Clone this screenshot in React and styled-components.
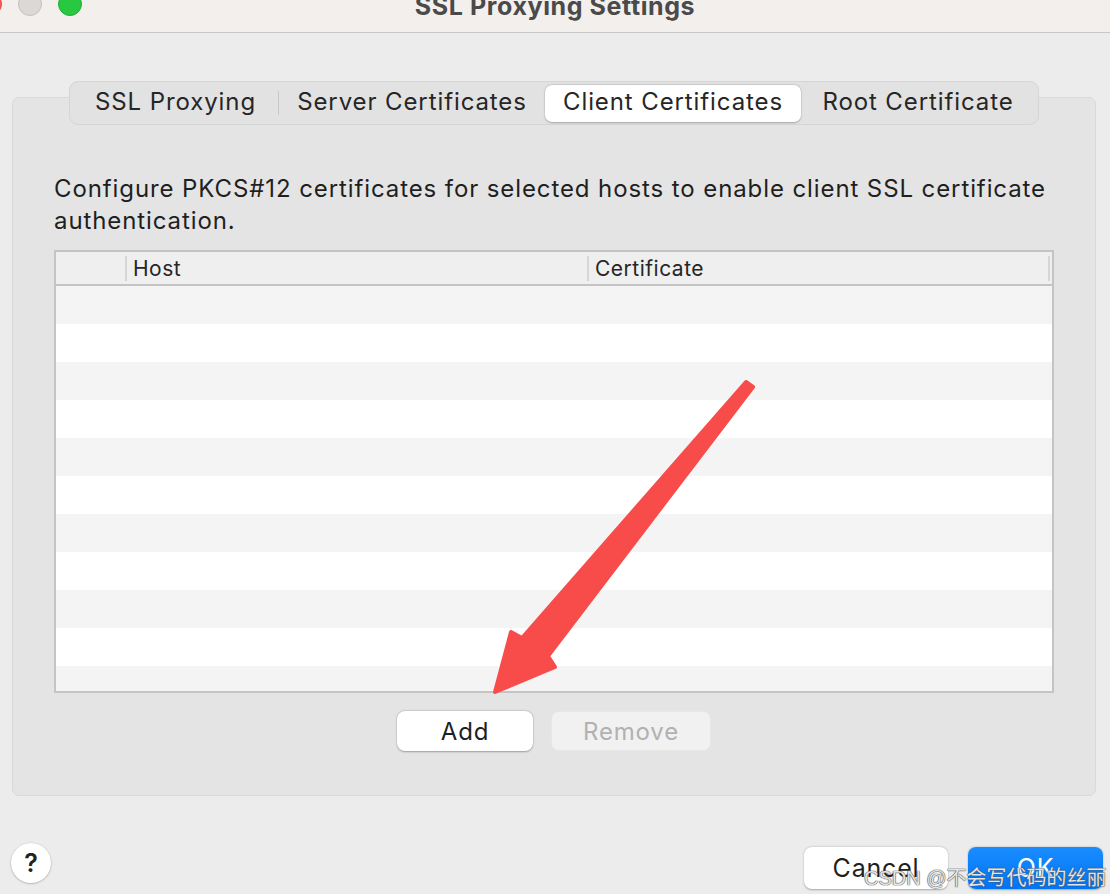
import React from "react";
import styled, { createGlobalStyle } from "styled-components";

const GlobalStyle = createGlobalStyle`
  html, body {
    margin: 0;
    padding: 0;
    background: #ececec;
  }
  body {
    font-family: Inter, "Noto Sans", "Liberation Sans", sans-serif;
    color: #262626;
  }
`;

const Window = styled.div`
  position: relative;
  width: 1110px;
  height: 894px;
  overflow: hidden;
  background: #ececec;
`;

const TitleBar = styled.div`
  height: 32px;
  display: grid;
  grid-template-columns: 1fr auto 1fr;
  align-items: start;
  background: #f3efec;
  border-bottom: 1px solid #c9c7c5;
  overflow: hidden;
`;

const Lights = styled.div`
  display: flex;
  gap: 16px;
  margin-left: -22px;
  margin-top: -8px;
`;

const Light = styled.span`
  width: 24px;
  height: 24px;
  border-radius: 50%;
  box-sizing: border-box;
  background: ${(p) => p.color};
  border: 1px solid ${(p) => p.edge};
`;

const Title = styled.div`
  font-size: 25px;
  font-weight: 700;
  letter-spacing: 0.6px;
  color: #4a4a4a;
  line-height: 25px;
  margin-top: -6px;
`;

const GroupBox = styled.div`
  margin: 64px 14px 0 12px;
  height: 699px;
  box-sizing: border-box;
  background: #e4e4e4;
  border: 1px solid #d9d9d9;
  border-radius: 7px;
  padding: 0 41px;
  display: flex;
  flex-direction: column;
`;

const TabBar = styled.div`
  align-self: center;
  margin-top: -17px;
  height: 44px;
  box-sizing: border-box;
  display: flex;
  align-items: center;
  padding: 0 3px;
  background: #e2e2e2;
  border: 1px solid #d5d5d5;
  border-radius: 9px;
`;

const Tab = styled.div`
  width: ${(p) => p.w}px;
  height: 37px;
  box-sizing: border-box;
  padding-bottom: 3px;
  display: flex;
  align-items: center;
  justify-content: center;
  font-size: 24px;
  letter-spacing: 0.9px;
  color: #262626;
  border-radius: 7px;
  background: ${(p) => (p.active ? "#ffffff" : "transparent")};
  box-shadow: ${(p) =>
    p.active ? "0 0.5px 2px rgba(0,0,0,0.25), 0 0 0 0.5px rgba(0,0,0,0.06)" : "none"};
`;

const TabDivider = styled.span`
  width: 1px;
  height: 24px;
  background: #c8c8c8;
`;

const Description = styled.p`
  margin: 48px 0 0;
  font-size: 24px;
  letter-spacing: 0.9px;
  line-height: 32px;
  color: #1f1f1f;
`;

const Table = styled.div`
  margin-top: 13px;
  height: 443px;
  box-sizing: border-box;
  border: 2px solid #c4c4c4;
  background: #ffffff;
  display: flex;
  flex-direction: column;
  overflow: hidden;
`;

const HeaderRow = styled.div`
  height: 32px;
  flex: none;
  display: grid;
  grid-template-columns: 71px 462px 1fr;
  background: #efefef;
  border-bottom: 2px solid #c4c4c4;
`;

const HeaderCell = styled.div`
  display: flex;
  align-items: center;
  padding-left: 6px;
  font-size: 21px;
  letter-spacing: 0.5px;
  color: #262626;
  border-right: 2px solid #d6d6d6;
  margin: 4px 0 3px;
  ${(p) => (p.last ? "margin-right: 2px;" : "")}
`;

const Row = styled.div`
  height: 38px;
  flex: none;
  background: ${(p) => (p.odd ? "#ffffff" : "#f4f4f4")};
`;

const ButtonRow = styled.div`
  display: flex;
  justify-content: center;
  gap: 18px;
  margin-top: 18px;
`;

const PushButton = styled.button`
  width: ${(p) => p.w}px;
  height: 40px;
  border-radius: 8px;
  font-family: inherit;
  font-size: 24px;
  letter-spacing: 0.8px;
  padding: 0;
  cursor: default;
  border: ${(p) => (p.disabled ? "1px solid rgba(0,0,0,0.04)" : "none")};
  background: ${(p) => (p.disabled ? "#f1f1f1" : "#ffffff")};
  color: ${(p) => (p.disabled ? "#b1b1b1" : "#1f1f1f")};
  box-shadow: ${(p) =>
    p.disabled ? "none" : "0 0.5px 2px rgba(0,0,0,0.3), 0 0 0 0.5px rgba(0,0,0,0.05)"};
`;

const Footer = styled.div`
  margin-top: 47px;
  display: flex;
  align-items: flex-start;
  padding: 0 7px 0 11px;
`;

const HelpButton = styled.div`
  width: 40px;
  height: 40px;
  border-radius: 50%;
  background: #ffffff;
  box-shadow: 0 0.5px 2px rgba(0,0,0,0.35);
  display: flex;
  align-items: center;
  justify-content: center;
  font-size: 25px;
  font-weight: 600;
  color: #222;
`;

const Spacer = styled.div`
  flex: 1;
`;

const DialogButton = styled.button`
  width: ${(p) => p.w}px;
  height: 42px;
  margin-top: 4px;
  margin-left: ${(p) => p.gap || 0}px;
  border-radius: 8px;
  border: none;
  padding: 0;
  font-family: inherit;
  font-size: 25px;
  letter-spacing: 0.8px;
  color: ${(p) => (p.primary ? "#ffffff" : "#1f1f1f")};
  background: ${(p) =>
    p.primary ? "linear-gradient(180deg, #1a8dff 0%, #0074f5 100%)" : "#ffffff"};
  box-shadow: 0 0.5px 2px rgba(0,0,0,0.3);
`;

const Watermark = styled.div`
  position: absolute;
  left: 864px;
  top: 862px;
  font-family: "Liberation Sans", "Noto Sans CJK SC", sans-serif;
  font-size: 20px;
  color: rgba(255, 255, 255, 0.85);
  text-shadow: 0 0 1px #555, 0 0 1px #555, 0 0 1px #555;
  white-space: nowrap;
  pointer-events: none;
`;

const ArrowLayer = styled.svg`
  position: absolute;
  left: 0;
  top: 0;
  pointer-events: none;
`;

const tabs = [
  { label: "SSL Proxying", w: 205 },
  { label: "Server Certificates", w: 266 },
  { label: "Client Certificates", w: 256, active: true },
  { label: "Root Certificate", w: 234 },
];

function App() {
  return (
    <>
      <GlobalStyle />
      <Window>
        <TitleBar>
          <Lights>
            <Light color="#fe5f57" edge="#e2463f" />
            <Light color="#dcd8d5" edge="#c4c0bd" />
            <Light color="#28c840" edge="#1fae33" />
          </Lights>
          <Title>SSL Proxying Settings</Title>
          <div />
        </TitleBar>

        <GroupBox>
          <TabBar>
            {tabs.map((t, i) => (
              <React.Fragment key={t.label}>
                {i === 1 && <TabDivider />}
                <Tab w={t.w} active={t.active}>
                  {t.label}
                </Tab>
              </React.Fragment>
            ))}
          </TabBar>

          <Description>
            Configure PKCS#12 certificates for selected hosts to enable client SSL certificate
            authentication.
          </Description>

          <Table>
            <HeaderRow>
              <HeaderCell />
              <HeaderCell>Host</HeaderCell>
              <HeaderCell last>Certificate</HeaderCell>
            </HeaderRow>
            {Array.from({ length: 11 }).map((_, i) => (
              <Row key={i} odd={i % 2 === 1} />
            ))}
          </Table>

          <ButtonRow>
            <PushButton w={136}>Add</PushButton>
            <PushButton w={160} disabled>
              Remove
            </PushButton>
          </ButtonRow>
        </GroupBox>

        <Footer>
          <HelpButton>?</HelpButton>
          <Spacer />
          <DialogButton w={144}>Cancel</DialogButton>
          <DialogButton w={135} gap={20} primary>
            OK
          </DialogButton>
        </Footer>

        <ArrowLayer width="1110" height="894" viewBox="0 0 1110 894">
          <polygon
            points="746,382 753,387 548,656 555,667 495,692 511,632 522,638"
            fill="#f74c4a"
            stroke="#f74c4a"
            strokeWidth="4"
            strokeLinejoin="round"
          />
        </ArrowLayer>

        <Watermark>CSDN @不会写代码的丝丽</Watermark>
      </Window>
    </>
  );
}

export default App;
